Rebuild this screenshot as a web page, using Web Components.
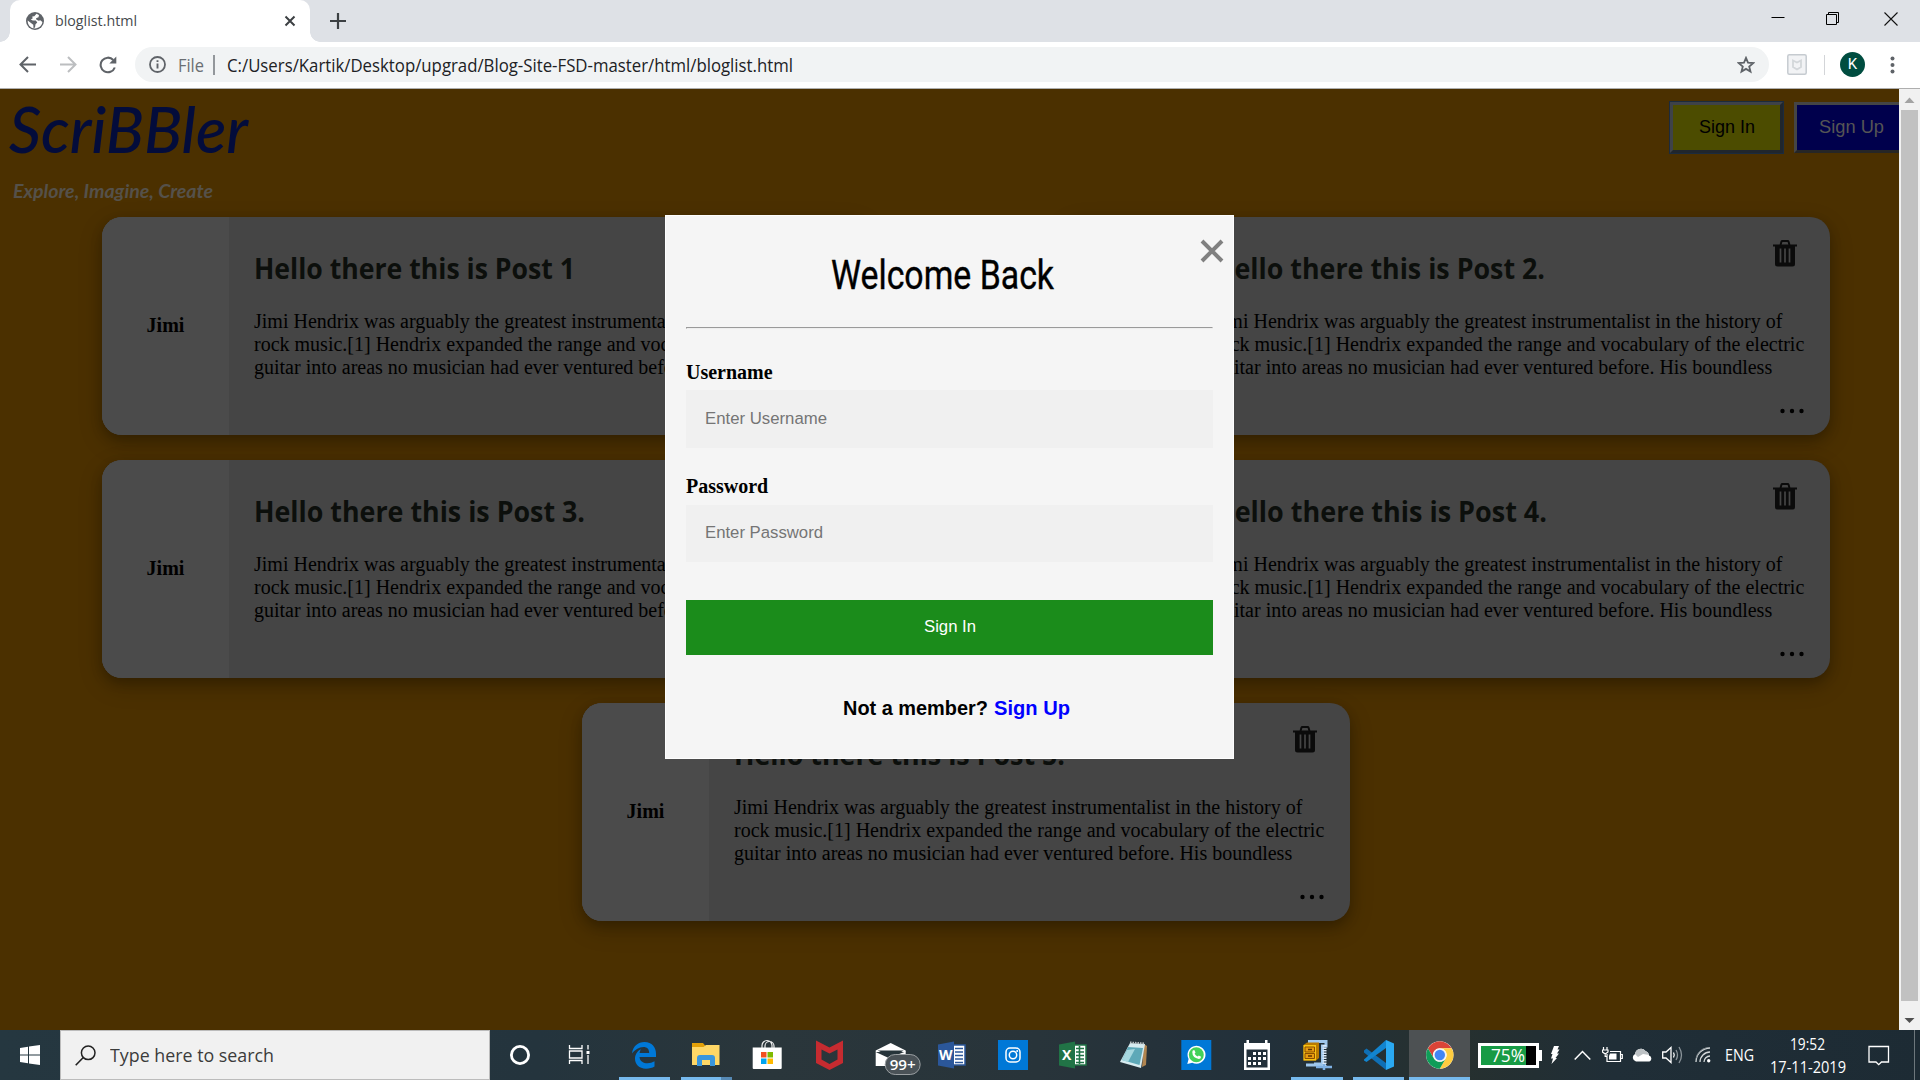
<!DOCTYPE html>
<html lang="en"><head><meta charset="utf-8"><title>bloglist.html</title>
<style>html,body{margin:0;width:1920px;height:1080px;overflow:hidden}</style></head>
<body><desktop-screen></desktop-screen>
<script>
const make=(name,html,init)=>customElements.define(name,class extends HTMLElement{
  constructor(){super();this.attachShadow({mode:'open'});}
  connectedCallback(){if(this.shadowRoot.childNodes.length)return;
    const t=document.createElement('template');
    t.innerHTML=typeof html==='function'?html(this):html;
    this.shadowRoot.append(t.content.cloneNode(true));
    if(init)init(this);}
});

/* Text run that is stretched or condensed to a given advance width */
make('fit-text',`<style>:host{display:inline-block;white-space:nowrap}span{display:inline-block;transform-origin:0 50%}</style><span><slot></slot></span>`,el=>{
  const s=el.shadowRoot.querySelector('span'),w=+el.getAttribute('w'),n=s.offsetWidth&&s.getBoundingClientRect().width;
  el.style.width=w+'px';if(n)s.style.transform=`scaleX(${w/n})`;
});

make('tab-strip',`<style>
:host{display:flex;height:42px;background:#dee1e6;font:15px/42px "Open Sans",sans-serif;color:#45494d;padding-left:10px;box-sizing:border-box}
.tab{position:relative;width:300px;height:42px;background:#fff;border-radius:10px 10px 0 0;display:flex;align-items:center;box-sizing:border-box;padding:0 14px 0 16px}
.tab:before,.tab:after{content:"";position:absolute;bottom:0;width:10px;height:10px}
.tab:before{left:-10px;background:radial-gradient(circle at 0 0,#dee1e6 9.5px,#fff 10px)}
.tab:after{right:-10px;background:radial-gradient(circle at 100% 0,#dee1e6 9.5px,#fff 10px)}
fit-text{margin-left:11px;flex:1;height:42px;line-height:40px}
.x{margin-left:auto}.plus{margin:13px 0 0 20px}.ctl{margin-left:auto;display:flex;padding-top:10px}
.ctl svg{margin-right:31px}
</style>
<div class="tab"><svg width="18" height="18" viewBox="0 0 18 18"><circle cx="9" cy="9" r="9" fill="#5f6368"/><path d="M10.500 1.800L8.300 4.200 6.300 4.600 6.600 6.500 4.700 7.600 6.800 8.400 9.800 8.500 11.300 10.500 9.500 12.200 9 15.500 7.500 16.300 7.300 12.700 5.300 11.200 1.700 8.500C1.500 12 3.700 16.400 9 16.400 13 16.400 16 13.300 16.400 10L14.300 8.300 12.700 8.800 10.500 7.800 10 6.200 12.500 5.300 13 3Z" fill="#fff"/></svg><fit-text w="82">bloglist.html</fit-text><svg class="x" width="12" height="12" viewBox="0 0 12 12"><path d="M1.500 1.500L10.500 10.500M10.500 1.500L1.500 10.500" stroke="#3c4043" stroke-width="2"/></svg></div>
<svg class="plus" width="16" height="16" viewBox="0 0 16 16"><path d="M8 0V16M0 8H16" stroke="#3c4043" stroke-width="2.200"/></svg>
<div class="ctl"><svg width="16" height="18"><path d="M1.500 7.500H14.500" stroke="#000"/></svg>
<svg style="margin-left:8px" width="16" height="18"><path d="M1.500 4.500H11.500V14.500H1.500ZM3.500 4V2.500H13.500V12.500H12" fill="none" stroke="#000"/></svg>
<svg style="margin:1px 22px 0 12px" width="14" height="16"><path d="M.5 1.500L13.500 14.500M13.500 1.500L.5 14.500" stroke="#111" stroke-width="1.100"/></svg></div>`);

make('address-bar',`<style>
:host{display:flex;height:47px;box-sizing:border-box;background:#fff;border-bottom:1px solid #aeaeae;padding:5px 19px 0 19px;font:17.500px/36px "Open Sans",sans-serif}
:host>svg{margin-top:9px;flex:none}
.omni{width:1634px;margin-left:17px;height:35px;border-radius:18px;background:#f1f3f4;display:flex;box-sizing:border-box;padding:0 14px 0 14px;margin-right:18px}
.omni svg{margin-top:9px;flex:none}.file{color:#6a6e72;margin-left:12px}.bar{width:1.500px;height:20px;background:#93979b;margin:8px 12px 0 9px}.url{color:#202124}.star{margin-left:auto}
.sep{width:1px;height:20px;background:#d3d5d8;margin:8px 15px 0 17px}
.av{width:25px;height:25px;border-radius:50%;background:#004d40;color:#fff;font:15px/25px Roboto,sans-serif;text-align:center;margin:5px 0 0}
</style>
<svg width="18" height="17" viewBox="0 0 18 17"><path d="M17 8.500H2M9 1L1.500 8.500 9 16" fill="none" stroke="#5f6368" stroke-width="2"/></svg>
<svg style="margin-left:22px" width="18" height="17" viewBox="0 0 18 17"><path d="M1 8.500H16M9 1L16.500 8.500 9 16" fill="none" stroke="#bcbec0" stroke-width="2"/></svg>
<svg style="margin-left:22px" width="18" height="18" viewBox="0 0 18 18"><path d="M15.800 11.500A7.300 7.300 0 1 1 14.300 4" fill="none" stroke="#5f6368" stroke-width="2.100"/><path d="M17.300 .5V7.500H10.300Z" fill="#5f6368"/></svg>
<div class="omni" style="margin-left:18px"><svg width="17" height="17" viewBox="0 0 17 17"><circle cx="8.500" cy="8.500" r="7.500" fill="none" stroke="#5f6368" stroke-width="1.800"/><path d="M8.500 7.500V12.500M8.500 4.300V6" stroke="#5f6368" stroke-width="1.900"/></svg>
<fit-text class="file" w="26">File</fit-text><i class="bar"></i><fit-text class="url" w="566">C:/Users/Kartik/Desktop/upgrad/Blog-Site-FSD-master/html/bloglist.html</fit-text>
<svg class="star" width="18" height="18" viewBox="0 0 18 18"><path d="M9 1.900L11 6.700 16.200 7.100 12.200 10.500 13.500 15.600 9 12.900 4.500 15.600 5.800 10.500 1.800 7.100 7 6.700Z" fill="none" stroke="#5f6368" stroke-width="1.800"/></svg></div>
<svg style="margin-top:7px" width="20" height="21" viewBox="0 0 20 21"><rect x=".8" y=".8" width="18.400" height="19.400" rx="1.500" fill="#f2f3f5" stroke="#c6cbd0" stroke-width="1.500"/><path d="M6 6.500L10 8.500 14 6.500V13L10 15.500 6 13Z" fill="none" stroke="#d3d7da" stroke-width="1.800"/></svg>
<i class="sep"></i><div class="av">K</div>
<svg style="margin:9px 0 0 25px" width="5" height="18" viewBox="0 0 5 18"><g fill="#5f6368"><circle cx="2.500" cy="2.500" r="2"/><circle cx="2.500" cy="9" r="2"/><circle cx="2.500" cy="15.500" r="2"/></g></svg>`);

make('outset-button',`<style>:host{display:block;box-sizing:border-box;height:51px;border:3px solid;border-color:#454545 #262626 #262626 #454545;font:19px/43px "Liberation Sans",sans-serif;text-align:center;flex:none}</style><slot></slot>`);

make('site-header',`<style>
:host{display:flex;height:128px;box-sizing:border-box}
.brand{padding-left:9px;display:flex;flex-direction:column}
.logo{font:italic 500 64px/80px Lato,sans-serif;color:#030c3b;height:80px}
.tag{font:italic bold 19px/24px Lato,sans-serif;color:#55514a;margin:10px 0 0 4px;height:24px}
.btns{margin-left:auto;display:flex;gap:11px;padding-top:13px;width:229px}
.in{width:113px;background:#4c4c00;color:#000;border-color:#3e4248 #20262d #20262d #3e4248;outline:1px solid #1c2b3d}
.up{width:129px;background:#00004c;color:#555;text-align:left}
.up fit-text{margin-left:22px}
</style><div class="brand"><fit-text class="logo" w="239">ScriBBler</fit-text><fit-text class="tag" w="200">Explore, Imagine, Create</fit-text></div>
<div class="btns"><outset-button class="in"><fit-text w="56">Sign In</fit-text></outset-button><outset-button class="up"><fit-text w="65">Sign Up</fit-text></outset-button></div>`);

make('post-card',el=>`<style>
:host{display:flex;width:768px;height:218px;border-radius:20px;overflow:hidden;background:#454545;box-shadow:0 5px 12px rgba(0,0,0,.2),0 8px 25px rgba(0,0,0,.19);font:20px/23px "Liberation Serif",serif;color:#000}
.who{width:127px;background:#4b4b4b;display:flex;align-items:center;justify-content:center;font-weight:bold;flex:none;height:217px}
.side{background:#4b4b4b}
.body{flex:1;padding:23px 27px 0 25px;display:flex;flex-direction:column}
.head{display:flex;height:70px;justify-content:space-between;padding-right:7px}
h2{margin:9px 0 0;font:700 28px/38px "Open Sans",sans-serif;color:#0c0f0c}
p{margin:0;white-space:nowrap;height:69px}
.dots{align-self:flex-end;margin:28px .5px 0 0}
</style><div class="side"><div class="who">Jimi</div></div><div class="body"><div class="head"><h2><fit-text w="${el.getAttribute('hw')}"><slot></slot></fit-text></h2>
<svg width="24" height="27" viewBox="0 0 24 27"><path d="M7.500 5L8.500 1.500Q8.700 1 9.300 1H14.700Q15.300 1 15.500 1.500L16.500 5" fill="none" stroke="#0b0b0b" stroke-width="2"/><path d="M0 4.500H24V6.500H22V24Q22 26.500 19.500 26.500H4.500Q2 26.500 2 24V6.500H0Z" fill="#0b0b0b"/><path d="M7.500 8.500V22.500M12 8.500V22.500M16.500 8.500V22.500" stroke="#454545" stroke-width="1.700"/></svg></div>
<p>Jimi Hendrix was arguably the greatest instrumentalist in the history of<br>rock music.[1] Hendrix expanded the range and vocabulary of the electric<br>guitar into areas no musician had ever ventured before. His boundless</p>
<svg class="dots" width="24" height="8" viewBox="0 0 24 8"><circle cx="2.500" cy="4" r="2.200"/><circle cx="12" cy="4" r="2.200"/><circle cx="21.500" cy="4" r="2.200"/></svg></div>`);

make('login-modal',`<style>
:host{position:absolute;left:665px;top:215px;width:569px;height:544px;box-sizing:border-box;background:#f5f5f5;border:1px solid #fefefe;padding:35px 20px 0;display:flex;flex-direction:column;color:#000}
.close{position:absolute;right:9.500px;top:22.500px}
h1{margin:0 8px 0 0;font:400 41px/48px Roboto,sans-serif;-webkit-text-stroke:.4px #000;height:48px;text-align:center;padding-right:6px}
hr{margin:28px 0 0;width:100%;box-sizing:border-box;height:2px;border:1px solid;border-color:#9a9a9a #eee #eee #9a9a9a}
label{font:bold 20px/23px "Liberation Serif",serif;margin:32px 0 6px}
label fit-text{height:23px}
.pw{margin:27px 0 7px}
.field{height:58px;box-sizing:border-box;background:#f0f0f0;padding-left:18.500px;font:16.670px/57px "Liberation Sans",sans-serif;color:#757575}
.f2{height:57px;line-height:55px}
.go{margin-top:38px;height:55px;background:#1b8c1b;color:#fff;text-align:center;font:16.670px/53px "Liberation Sans",sans-serif}
.foot{margin:42px 0 0 156.500px;font:bold 20px/23px "Liberation Sans",sans-serif;display:flex;gap:6px}.foot .a{color:#00f}
</style><svg class="close" width="24" height="24" viewBox="0 0 24 24"><path d="M2 2L22 22M22 2L2 22" stroke="#808080" stroke-width="4"/></svg>
<h1><fit-text w="223">Welcome Back</fit-text></h1><hr>
<label>Username</label><div class="field"><fit-text w="122">Enter Username</fit-text></div>
<label class="pw">Password</label><div class="field f2"><fit-text w="118">Enter Password</fit-text></div>
<div class="go"><fit-text w="52">Sign In</fit-text></div>
<div class="foot"><fit-text w="145">Not a member?</fit-text><fit-text class="a" w="76">Sign Up</fit-text></div>`);

make('scroll-bar',`<style>:host{display:flex;flex-direction:column;align-items:center;width:21px;height:941px;background:#f1f1f1}
.t{width:17px;height:891px;background:#c1c1c1}</style>
<svg width="21" height="21"><path d="M5.500 14L10.500 8.500 15.500 14Z" fill="#a3a3a3"/></svg><div class="t"></div><svg style="margin-top:8px" width="21" height="21"><path d="M5.500 9L10.500 14 15.500 9Z" fill="#505050"/></svg>`);

make('blog-page',`<style>
:host{position:relative;display:flex;height:941px}
.view{width:1899px;background:#4b3000;overflow:hidden}
.row{display:flex;justify-content:center;gap:192px;margin-bottom:25px;padding-left:33px}
</style><div class="view"><site-header></site-header>
<div class="row"><post-card hw="321">Hello there this is Post 1</post-card><post-card hw="331">Hello there this is Post 2.</post-card></div>
<div class="row"><post-card hw="331">Hello there this is Post 3.</post-card><post-card hw="333">Hello there this is Post 4.</post-card></div>
<div class="row"><post-card hw="331">Hello there this is Post 5.</post-card></div></div><scroll-bar></scroll-bar>`);

const office=(c,d,l,lines)=>`<path d="M14 5H28V25H14Z" fill="#fff" stroke="${c}" stroke-width="1.500"/>${lines}<path d="M1 4.500L17 1.500V28.500L1 25.500Z" fill="${d}"/><text x="8.700" y="20" text-anchor="middle" font-family="Open Sans" font-weight="bold" font-size="14" fill="#fff">${l}</text>`;
const icons={
edge:`<path transform="translate(-1)" d="M3 13.500C4 6 9 2 15.500 2 23 2 27 7.500 27 13.500V17H10.500C11 21.500 14.500 23.300 18.500 23.300 21 23.300 23.500 22.500 25.500 21.300V26.500C23.200 27.900 20.500 28.700 17 28.700 10 28.700 6 24 6 18.800 6 14 9 10.500 12 9.200 11.300 10.300 10.700 11.700 10.600 13H20.200C20.200 9 18 7 14.500 7 10 7 5.500 10 3 13.500Z" fill="#0078d7"/>`,
folder:`<path d="M1 3H12L14.500 6H22V12H1Z" fill="#e3a008"/><path d="M1 7H12.500L15 5H28.500V25H1Z" fill="#ffd766"/><path d="M6 26V18Q6 15 9 15H21Q24 15 24 18V26H19V20H11V26Z" fill="#3a96dd"/>`,
store:`<path d="M10 8V5.500A4.500 4.500 0 0 1 20 5.500V8M13 8V6A4 4 0 0 1 22 6V8" fill="none" stroke="#eee" stroke-width="1.200"/><path d="M.7 7.500H29.700V28Q29.700 29 28.700 29H1.700Q.7 29 .7 28Z" fill="#fff"/><path d="M9 12H14.500V17.500H9Z" fill="#f25022"/><path d="M15.500 12H21V17.500H15.500Z" fill="#7fba00"/><path d="M9 18.500H14.500V24H9Z" fill="#00a4ef"/><path d="M15.500 18.500H21V24H15.500Z" fill="#ffb900"/>`,
mcafee:`<path transform="translate(1.500)" d="M1.500 .5L15 7.500 28.500 .5V23L15 30 1.500 23ZM7 9.500V19.500L15 24 23 19.500V9.500L15 13.500Z" fill="#c62b30" fill-rule="evenodd"/>`,
mail:`<g transform="translate(.7)"><path d="M1 10.500L16 3 31 10.500V12L1 12Z" fill="#fff"/><path d="M1 12L14 18 31 11.500V26H1Z" fill="#fff"/><path d="M3 10.500H29L17 17.500Z" fill="#26343a"/><rect x="10.500" y="14.500" width="35" height="20" rx="10" fill="#4a5257" stroke="#9a9fa2"/><text x="28" y="30" text-anchor="middle" font-family="Open Sans" font-weight="600" font-size="15" textLength="26" lengthAdjust="spacingAndGlyphs" fill="#fff">99+</text></g>`,
word:'<g transform="translate(2)">'+office('#2b579a','#2b579a','W','<path d="M18 8.500H26M18 12H26M18 15.500H26M18 19H26M18 22.500H26" stroke="#2b579a" stroke-width="1.500"/>')+'</g>',
insta:`<g transform="translate(2)"><path d="M0 0H30V30H0Z" fill="#0078d7"/><g fill="none" stroke="#fff" stroke-width="1.500"><rect x="8" y="8" width="14" height="14" rx="4"/><circle cx="15" cy="15" r="3.700"/></g><circle cx="19.200" cy="11" r="1" fill="#fff"/></g>`,
excel:'<g transform="translate(1)">'+office('#217346','#217346','X','<path d="M18 8.500H26M18 12H26M18 15.500H26M18 19H26M18 22.500H26M21.500 6V24" stroke="#217346" stroke-width="1.600"/>')+'</g>',
notepad:`<path d="M25 4L28 6 27 25 23 27Z" fill="#b08550"/><path d="M11 3L26 4 22 28 1 22Z" fill="#d7ecf0"/><path d="M9 7L24 8 20.500 25 3 20Z" fill="#5ea9b8"/><path d="M8 10L16 9 9 22 3 20Z" fill="#a6d8df"/><path d="M11 2.500L26 3.500" stroke="#b9bfc0" stroke-width="2" stroke-dasharray="1.500 1"/>`,
whatsapp:`<g transform="translate(1.300)"><path d="M0 0H30V30H0Z" fill="#0078d7"/><path d="M6 24L7.300 19A9 9 0 1 1 11 22.700Z" fill="#fff"/><circle cx="15" cy="14.700" r="7.500" fill="#43d15a"/><path d="M11.500 10.500L13 10 14.200 12.500 13.300 13.700Q14.500 15.800 16.500 16.600L17.500 15.600 19.800 16.700Q19.500 19 17.500 19 11 17.800 11 12Z" fill="#fff"/></g>`,
cal:`<g transform="translate(1)"><path d="M2 3H4.500V0H7V3H23V0H25.500V3H28V30H2ZM4.500 9.500V27.500H25.500V9.500Z" fill="#fff" fill-rule="evenodd"/><path d="M11 12H14V15H11ZM16 12H19V15H16ZM21 12H24V15H21ZM6 17H9V20H6ZM11 17H14V20H11ZM16 17H19V20H16ZM21 17H24V20H21ZM6 22H9V25H6ZM11 22H14V25H11ZM16 22H19V25H16Z" fill="#fff"/></g>`,
zip:`<path d="M6 1.500H24V6H20.500V24H12M4 25H24" fill="none" stroke="#9fc7ec" stroke-width="3"/><path d="M22.500 5V26" stroke="#dceafa" stroke-width="4" stroke-dasharray="1.500 1"/><path d="M14 27H30M22 24V30" stroke="#7fb1e4" stroke-width="2.500"/><path d="M1.500 5L5 2.500H17V18L14 20.500H1.500Z" fill="#b97a00"/><path d="M1.500 5H14V20.500H1.500Z" fill="#f8c313"/><path d="M3 7H12.500V12H3ZM3 13.500H12.500V18.500H3Z" fill="#e89c10" stroke="#8a4e00"/><path d="M6 9.500H10M6 16H10" stroke="#5d3500" stroke-width="1.500"/>`,
code:`<g transform="translate(1)"><path d="M0 10.500L2.500 8.500 22 23V30L0 12.500Z" fill="#0f6fb5"/><path d="M0 19.500L22 0V8L2.500 22 0 20.500Z" fill="#1284cf"/><path d="M22 0L30 3.500V26.500L22 30Z" fill="#2aa9f2"/></g>`,
chrome:`<g transform="translate(.8)"><circle cx="15" cy="15" r="13.700" fill="#fff"/><path d="M3.140 8.150A13.700 13.700 0 0 1 26.860 8.150H15A6.850 6.850 0 0 0 9.070 18.430Z" fill="#db4437"/><path d="M26.860 8.150A13.700 13.700 0 0 1 15 28.700L20.930 18.430A6.850 6.850 0 0 0 15 8.150Z" fill="#ffcd40"/><path d="M15 28.700A13.700 13.700 0 0 1 3.140 8.150L9.070 18.430A6.850 6.850 0 0 0 20.930 18.430Z" fill="#0f9d58"/><circle cx="15" cy="15" r="6.500" fill="#f1f1f1"/><circle cx="15" cy="15" r="5.200" fill="#4285f4"/></g>`,
cortana:`<circle cx="15" cy="15" r="8.600" fill="none" stroke="#fff" stroke-width="2.800"/>`,
view:`<g fill="none" stroke="#fff" stroke-width="1.300"><path d="M4.500 5V8.500H17V5M4.500 24V20.500H17V24M4.500 11H17V18H4.500ZM23 5V9.500M23 15V24"/></g><path d="M21.500 11H24.500V14H21.500Z" fill="#fff"/>`
};
make('task-icon',el=>`<style>:host{position:relative;display:flex;width:61.140px;height:50px;align-items:center;justify-content:center;flex:none}
:host([narrow]){width:60px}:host([active]){background:#4d5153}
svg{overflow:visible}
i{position:absolute;bottom:0;left:5px;right:5px;height:3px;background:#76b9ed;display:none}:host([open]) i{display:block}:host([active]) i{left:0;right:0}:host([stack]) i{left:6px;right:4px;background:linear-gradient(90deg,#76b9ed 40px,#5689b4 40px)}</style><svg width="30" height="30" viewBox="0 0 30 30">${icons[el.getAttribute('name')]}</svg><i></i>`);

make('task-bar',`<style>
:host{display:flex;height:50px;background:linear-gradient(90deg,#253740,#24343d 28%,#2a363b 40%,#28343a 54%,#22303a 66%,#26302f 76%,#202e37 84%,#1d2b34);color:#fff;font:16px/20px "Open Sans",sans-serif}
.start{width:60px;display:flex;align-items:center;justify-content:center}
.search{width:430px;box-sizing:border-box;background:#f1f1f1;border:1px solid #bcbcbc;display:flex;align-items:center;padding-left:14px;color:#3b3b3b;font-size:19px}
.search fit-text{margin-left:14px;line-height:48px}
.apps{display:flex;margin-left:4px}
.tray{display:flex;flex:1;align-items:center;padding-left:8px}
.bat{width:61px;height:25px;border:3px solid #fff;box-sizing:border-box;background:linear-gradient(90deg,#179b45 45px,#000 45px);font-size:17.500px;line-height:18px;position:relative;padding-left:10px}
.bat:after{content:"";position:absolute;right:-6px;top:4px;width:3px;height:11px;background:#fff}
.clock{width:90px;display:flex;flex-direction:column;align-items:center;gap:3px;margin-left:9px}
svg{flex:none}.clock fit-text{height:20px}
</style>
<div class="start"><svg width="20" height="20" viewBox="0 0 20 20"><path d="M0 3L8 1.800V9.500H0ZM9 1.600L20 0V9.500H9ZM0 10.500H8V18.200L0 17ZM9 10.500H20V20L9 18.400Z" fill="#fff"/></svg></div>
<div class="search"><svg width="21" height="21" viewBox="0 0 21 21"><circle cx="13.200" cy="7.800" r="6.800" fill="none" stroke="#222" stroke-width="1.500"/><path d="M8.300 12.500L.7 20.300" stroke="#222" stroke-width="1.600"/></svg><fit-text w="164">Type here to search</fit-text></div>
<task-icon narrow name="cortana"></task-icon><task-icon narrow name="view"></task-icon>
<div class="apps"><task-icon open name="edge"></task-icon><task-icon open stack name="folder"></task-icon><task-icon name="store"></task-icon><task-icon name="mcafee"></task-icon><task-icon name="mail"></task-icon><task-icon name="word"></task-icon><task-icon name="insta"></task-icon><task-icon name="excel"></task-icon><task-icon name="notepad"></task-icon><task-icon name="whatsapp"></task-icon><task-icon name="cal"></task-icon><task-icon open name="zip"></task-icon><task-icon open name="code"></task-icon><task-icon open active name="chrome"></task-icon></div>
<div class="tray"><div class="bat"><fit-text w="34">75%</fit-text></div>
<svg style="margin-left:11px" width="11" height="18" viewBox="0 0 11 18"><path d="M4 0H9L7.500 3.500H9.500L7 7.500H9L5.500 12H7L1.500 18 3 12.500H1L2.500 8H1Z" fill="#fff"/></svg>
<svg style="margin-left:13px" width="17" height="11" viewBox="0 0 17 11"><path d="M.7 9.500L8.500 1.500 16.300 9.500" fill="none" stroke="#fff" stroke-width="1.500"/></svg>
<svg style="margin-left:11px" width="21" height="16" viewBox="0 0 21 16"><path d="M5 7V14.500H18.500V4.500H8M18.500 7.500H20.300V11.500H18.500" fill="none" stroke="#fff" stroke-width="1.200"/><path d="M8 6.500H14.500V12.500H7V9Z" fill="#fff"/><path d="M1.500 0V3M5 0V3M.5 3H6V5L3.200 7 .5 5ZM3.200 6.500V9.500H5" fill="none" stroke="#fff" stroke-width="1.200"/></svg>
<svg style="margin-left:9px" width="21" height="14" viewBox="0 0 21 14"><path d="M4 13.500A4 4 0 0 1 3 6 6 6 0 0 1 13.500 3 5 5 0 0 1 17 7.500 3.200 3.200 0 0 1 17.500 13.500Z" fill="#fff"/><path d="M3 6A6 6 0 0 1 13.500 3 5 5 0 0 1 17 7L11 6 6 9Z" fill="#bcc1c4"/></svg>
<svg style="margin-left:9px" width="21" height="18" viewBox="0 0 21 18"><path d="M.7 6H4L9 1.500V16.500L4 12H.7Z" fill="none" stroke="#fff" stroke-width="1.300"/><path d="M11.500 6.500Q13 9 11.500 11.500" fill="none" stroke="#fff" stroke-width="1.300"/><path d="M14 4Q17 9 14 14M17 1Q22 9 17 17" fill="none" stroke="#8b949a" stroke-width="1.300"/></svg>
<svg style="margin-left:12px" width="16" height="16" viewBox="0 0 16 16"><g fill="none" stroke="#d4d9db" stroke-width="1.300"><path d="M1 15A14 14 0 0 1 15 1M5 15A10 10 0 0 1 15 5M9 15A6 6 0 0 1 15 9"/></g><path d="M1 11.500A14 14 0 0 1 11.500 .8" fill="none" stroke="#7d878c"/><circle cx="13.700" cy="13.700" r="1.700" fill="#fff"/></svg>
<fit-text style="margin-left:14px" w="29">ENG</fit-text>
<div class="clock"><fit-text w="35">19:52</fit-text><fit-text w="76">17-11-2019</fit-text></div>
<svg style="margin-left:15px" width="22" height="21" viewBox="0 0 22 21"><path d="M1 1.500H20.500V17H13.500L10.700 19.700 8 17H1Z" fill="none" stroke="#fff" stroke-width="1.300"/></svg>
<i style="margin-left:24px;width:1px;height:50px;background:#6d777c"></i></div>`);

make('desktop-screen',`<style>:host{display:flex;flex-direction:column;width:1920px;height:1080px;overflow:hidden;position:relative}</style>
<tab-strip></tab-strip><address-bar></address-bar><blog-page></blog-page><task-bar></task-bar><login-modal></login-modal>`);
</script></body></html>
